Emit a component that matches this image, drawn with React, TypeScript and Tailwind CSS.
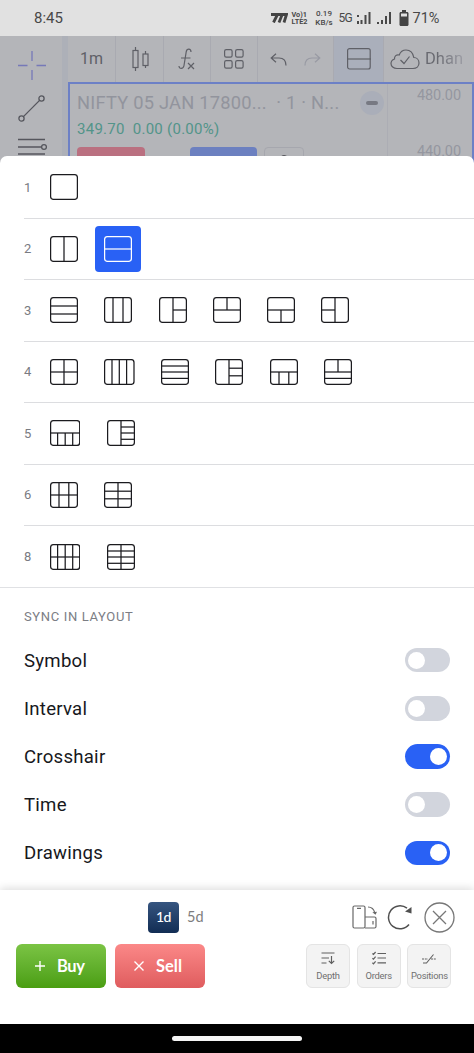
import { useState } from "react";

type Line = [number, number, number, number];

interface LayoutOption {
  id: string;
  width?: number;
  lines: Line[];
}

interface LayoutGroup {
  count: number;
  options: LayoutOption[];
}

const layoutGroups: LayoutGroup[] = [
  { count: 1, options: [{ id: "1", lines: [] }] },
  {
    count: 2,
    options: [
      { id: "2v", lines: [[14, 0, 14, 26]] },
      { id: "2h", lines: [[0, 13, 28, 13]] },
    ],
  },
  {
    count: 3,
    options: [
      { id: "3h", lines: [[0, 9, 28, 9], [0, 17, 28, 17]] },
      { id: "3v", lines: [[9, 0, 9, 26], [19, 0, 19, 26]] },
      { id: "3s", lines: [[14, 0, 14, 26], [14, 13, 28, 13]] },
      { id: "2-1", lines: [[0, 13, 28, 13], [14, 0, 14, 13]] },
      { id: "1-2", lines: [[0, 13, 28, 13], [14, 13, 14, 26]] },
      { id: "3r", lines: [[14, 0, 14, 26], [0, 13, 14, 13]] },
    ],
  },
  {
    count: 4,
    options: [
      { id: "4", lines: [[14, 0, 14, 26], [0, 13, 28, 13]] },
      { id: "4v", width: 30.6, lines: [[8, 0, 8, 26], [15.3, 0, 15.3, 26], [22.6, 0, 22.6, 26]] },
      { id: "4h", lines: [[0, 7, 28, 7], [0, 13, 28, 13], [0, 19.4, 28, 19.4]] },
      { id: "4s", lines: [[14, 0, 14, 26], [14, 9.2, 28, 9.2], [14, 16.8, 28, 16.8]] },
      { id: "1-3", lines: [[0, 13, 28, 13], [9, 13, 9, 26], [18.8, 13, 18.8, 26]] },
      { id: "2-1-1", lines: [[0, 13, 28, 13], [0, 19.4, 28, 19.4], [14, 0, 14, 13]] },
    ],
  },
  {
    count: 5,
    options: [
      { id: "1-4", width: 30.3, lines: [[0, 13, 30.3, 13], [7.6, 13, 7.6, 26], [15.2, 13, 15.2, 26], [22.7, 13, 22.7, 26]] },
      { id: "5s", lines: [[14, 0, 14, 26], [14, 7, 28, 7], [14, 13, 28, 13], [14, 19.3, 28, 19.3]] },
    ],
  },
  {
    count: 6,
    options: [
      { id: "6", lines: [[9, 0, 9, 26], [18.8, 0, 18.8, 26], [0, 13, 28, 13]] },
      { id: "6c", lines: [[14, 0, 14, 26], [0, 9.2, 28, 9.2], [0, 16.8, 28, 16.8]] },
    ],
  },
  {
    count: 8,
    options: [
      { id: "8", width: 30.3, lines: [[0, 13, 30.3, 13], [7.6, 0, 7.6, 26], [15.2, 0, 15.2, 26], [22.7, 0, 22.7, 26]] },
      { id: "8c", lines: [[14, 0, 14, 26], [0, 7, 28, 7], [0, 13, 28, 13], [0, 19.3, 28, 19.3]] },
    ],
  },
];

function LayoutIcon({ width = 28, lines }: LayoutOption) {
  return (
    <svg width={width} height="26" viewBox={`0 0 ${width} 26`} fill="none" stroke="currentColor" strokeWidth="1.25">
      <rect x="0.6" y="0.6" width={width - 1.2} height="24.8" rx="2.8" />
      {lines.map(([x1, y1, x2, y2], index) => (
        <line key={index} x1={x1} y1={y1} x2={x2} y2={y2} />
      ))}
    </svg>
  );
}

function StatusBar() {
  return (
    <div className="flex h-9 items-center bg-[#e1e1e1] pl-[34px] text-[#484848]">
      <span className="w-[236px] text-[15px] leading-9">8:45</span>
      <svg width="18" height="10" viewBox="0 0 18 10" fill="none" stroke="#444" strokeWidth="2.8">
        <path d="M1 1.5H16.5L14 9.5M7.5 1.5L3.5 9.5M12.2 1.5L9 9.5" />
      </svg>
      <div className="ml-[3.5px] w-[19px] text-[7.3px] font-bold leading-[7px]">
        <p>Vo)1</p>
        <p>LTE2</p>
      </div>
      <div className="ml-[4px] w-[19px] text-center text-[8px] font-medium leading-[9px]">
        <p>0.19</p>
        <p>KB/s</p>
      </div>
      <span className="ml-[5px] w-[15px] text-[12px] tracking-[-0.8px]">5G</span>
      <svg width="38" height="14" viewBox="0 0 38 14" fill="#484848" className="ml-[2px]">
        <path d="M1 4h2v2H1zM1 10h2v3H1zM4.5 9h2v4h-2zM8.5 4h2v9h-2zM12.5 1h2v12h-2zM21 11h2v2h-2zM25 9h2v4h-2zM29 5h2v8h-2zM33 1h2v12h-2z" />
      </svg>
      <svg width="10" height="17" viewBox="0 0 10 17" className="ml-[5px]" fill="#444">
        <path d="M3 0h4v2H3z" />
        <path fillRule="evenodd" d="M1.3 2h7.4l.8 1v12l-.8 1H1.3l-.8-1V3zM2 3.5v3h6v-3z" />
      </svg>
      <span className="ml-[4px] pt-px text-[14.5px]">71%</span>
    </div>
  );
}

function Toolbar() {
  return (
    <div className="flex h-[46px] text-[#5f6067]">
      <div className="flex w-[48px] items-center justify-center border-r border-[#a9aab1] text-[16px]">1m</div>
      <div className="flex w-[48px] items-center justify-center border-r border-[#a9aab1]">
        <svg width="18" height="24" viewBox="0 0 18 24" fill="none" stroke="currentColor" strokeWidth="1.2">
          <path d="M4.5 0V3.5M4.5 20.5V24M14.5 4V7M14.5 18.5V21" />
          <rect x="2" y="3.5" width="5" height="17" />
          <rect x="12" y="7" width="5" height="11.5" />
        </svg>
      </div>
      <div className="flex w-[47px] items-center justify-center border-r border-[#a9aab1]">
        <svg width="18" height="22" viewBox="0 0 18 22" fill="none" stroke="currentColor" strokeWidth="1.2">
          <path d="M13 4C13 .3 8.8 .3 8.2 3.8L6 17.5C5.3 21.4 1 21.2 1 18M3 10H12.5M10 15L16 21M16 15L10 21" />
        </svg>
      </div>
      <div className="flex w-[47px] items-center justify-center border-r border-[#a9aab1]">
        <svg width="20" height="20" viewBox="0 0 20 20" fill="none" stroke="currentColor" strokeWidth="1.2">
          <rect x="0.6" y="0.6" width="7.5" height="7.5" rx="1.6" />
          <rect x="11.6" y="0.6" width="7.5" height="7.5" rx="1.6" />
          <rect x="0.6" y="11.6" width="7.5" height="7.5" rx="1.6" />
          <rect x="11.6" y="11.6" width="7.5" height="7.5" rx="1.6" />
        </svg>
      </div>
      <div className="flex w-[76px] items-center justify-center gap-[17px] border-r border-[#a9aab1]">
        <svg width="17" height="13" viewBox="0 0 17 13" fill="none" stroke="currentColor" strokeWidth="1.2">
          <path d="M6 .8L1.2 5L6 9.3M1.2 5H9C14 5 16 8 16 12.5" />
        </svg>
        <svg width="17" height="13" viewBox="0 0 17 13" fill="none" stroke="#989aa3" strokeWidth="1.2">
          <path d="M11 .8L15.8 5L11 9.3M15.8 5H8C3 5 1 8 1 12.5" />
        </svg>
      </div>
      <div className="flex w-[49px] items-center justify-center bg-[#aaafbb] pl-px">
        <svg width="24" height="22" viewBox="0 0 24 22" fill="none" stroke="currentColor" strokeWidth="1.2">
          <rect x="0.6" y="0.6" width="22.6" height="20.4" rx="2" />
          <path d="M0 11H24" />
        </svg>
      </div>
      <div className="flex flex-1 items-center gap-[5px] overflow-hidden border-l border-[#a9aab1] pl-[6px]">
        <svg className="shrink-0" width="30" height="21" viewBox="0 0 30 21" fill="none" stroke="currentColor" strokeWidth="1.2">
          <path d="M7 19.5H23C26.5 19.5 29 17.2 29 14C29 10.8 26.7 8.6 23.8 8.5C23 4 20 1 16 1C12.4 1 10.3 3.1 9.2 6C6.5 5.3 4.2 7.1 4.5 10C2.3 10.8 1 12.4 1 14.5C1 17.2 3.4 19.5 7 19.5Z" />
          <path d="M10.5 11L14 14.5L19.5 7.5" />
        </svg>
        <span className="bg-linear-to-r from-[#686970] from-30% to-[#9b9ca4] bg-clip-text text-[16.5px] text-transparent">Dhan</span>
      </div>
    </div>
  );
}

function ChartPanel() {
  return (
    <div className="flex h-[92px] border-2 border-[#6c80c6]">
      <div className="w-[318px] border-r border-[#acadb4] pl-[7px]">
        <div className="flex h-[34px] items-center pt-[4px]">
          <span className="w-[283px] whitespace-pre text-[18.3px] tracking-[0.22px] text-[#92949d]">NIFTY 05 JAN 17800...  · 1 · N...</span>
          <span className="flex size-[24px] items-center justify-center rounded-full bg-[#aaaeb9]">
            <span className="h-[4px] w-[12px] rounded-full bg-[#777983]" />
          </span>
        </div>
        <p className="h-[29px] whitespace-pre text-[15px] leading-[22px] tracking-[0.27px] text-[#529489]">349.70  0.00 (0.00%)</p>
        <div className="flex">
          <div className="h-8 w-[68px] rounded bg-[#ba7080]" />
          <div className="ml-[45px] h-8 w-[67px] rounded bg-[#6c80c0]" />
          <div className="ml-[7px] flex h-8 w-[40px] justify-center rounded border border-[#a6a7ae] pt-[7px]">
            <span className="h-2 w-[6px] rounded-t-sm border-x border-t border-[#55565c]" />
          </div>
        </div>
      </div>
      <div className="flex-1 pl-[29px] text-[14.5px] leading-[20px] tracking-[-0.1px] text-[#9597a0]">
        <p className="mt-[2px] h-[56px]">480.00</p>
        <p>440.00</p>
      </div>
    </div>
  );
}

function DrawingBar() {
  return (
    <div className="flex w-[62px] flex-col items-center pt-[15px] pl-px text-[#55565d]">
      <svg width="28" height="29" viewBox="0 0 28 29" stroke="#7679b8" strokeWidth="1.3">
        <path d="M14 0V10M14 19V29M0 14.5H9.5M18.5 14.5H28" />
      </svg>
      <svg className="mt-[15px]" width="27" height="27" viewBox="0 0 27 27" fill="none" stroke="currentColor" strokeWidth="1.3">
        <circle cx="3.5" cy="23.5" r="2.6" />
        <circle cx="23.5" cy="3.5" r="2.6" />
        <path d="M5.4 21.6L21.6 5.4" />
      </svg>
      <svg className="mt-[16px] ml-[2px]" width="30" height="18" viewBox="0 0 30 18" fill="none" stroke="currentColor" strokeWidth="1.3">
        <path d="M0 1.5H27M0 9H23.5M0 16H27" />
        <circle cx="26" cy="9" r="2.4" />
      </svg>
    </div>
  );
}

interface SwitchRowProps {
  label: string;
  checked: boolean;
  onToggle: () => void;
}

function SwitchRow({ label, checked, onToggle }: SwitchRowProps) {
  return (
    <div className="flex h-[48.2px] items-center justify-between pr-6 pl-6">
      <span className="pt-[3px] text-[18.6px] tracking-[0.25px] text-[#17181c]">{label}</span>
      <button
        role="switch"
        aria-checked={checked}
        aria-label={label}
        onClick={onToggle}
        className={
          checked
            ? "flex h-[24.5px] w-[45.5px] cursor-pointer items-center justify-end rounded-full bg-[#2961f5] px-[3.5px]"
            : "flex h-[24.5px] w-[45.5px] cursor-pointer items-center rounded-full bg-[#d2d5dd] px-[3.5px]"
        }
      >
        <span className="size-[17px] rounded-full bg-white" />
      </button>
    </div>
  );
}

function Footer() {
  return (
    <div className="h-[134px] bg-white pl-4 font-['Lato',sans-serif] shadow-[0_-2px_8px_rgba(0,0,0,0.13)]">
      <div className="flex h-[54px] items-center">
        <button className="ml-[132px] size-[31px] rounded-[4px] bg-linear-to-b from-[#365580] to-[#122d54] pb-px text-[14px] font-medium tracking-[-0.5px] text-white">1d</button>
        <span className="ml-[8px] w-[164px] pb-px text-[14.5px] text-[#7d7d7d]">5d</span>
        <svg width="25" height="24" viewBox="0 0 25 24" fill="none" stroke="#686868" strokeWidth="1.2" className="ml-px overflow-visible">
          <rect x="1" y="1" width="12" height="22" rx="1.5" />
          <path d="M5 3.3H9M13 12H22.5Q24 12 24 13.5V21.5Q24 23 22.5 23H13M21 16V19.5M16 2C19.5 2 22 4.5 22.8 8" />
          <path d="M20.4 7.3L25 6.8L23.5 9.8Z" fill="#686868" stroke="none" />
        </svg>
        <svg className="ml-[10px]" width="26" height="26" viewBox="0 0 26 26" fill="none" stroke="#505050" strokeWidth="1.5">
          <path d="M22 20.5A11.5 11.5 0 1 1 20 4.2" />
          <path d="M24.5 3V9.5L18 7.5Z" fill="#505050" stroke="none" />
        </svg>
        <svg className="ml-[11px]" width="31" height="31" viewBox="0 0 31 31" fill="none" stroke="#777" strokeWidth="1.3">
          <circle cx="15.5" cy="15.5" r="14.5" />
          <path d="M9 9L22 22M22 9L9 22" />
        </svg>
      </div>
      <div className="flex h-11">
        <button className="flex h-[44px] w-[90px] items-center rounded-[6px] bg-linear-to-b from-[#7bc444] to-[#4a9e10] pl-[19px] text-[16.5px] font-bold text-white">
          <svg width="10" height="10" viewBox="0 0 10 10" stroke="white" strokeWidth="1.4">
            <path d="M5 0V10M0 5H10" />
          </svg>
          <span className="ml-[12px] pt-px tracking-[-0.4px]">Buy</span>
        </button>
        <button className="ml-[9px] flex h-[44px] w-[90px] items-center rounded-[6px] bg-linear-to-b from-[#fb8888] to-[#df5c5e] pl-[19px] text-[16.5px] font-bold text-white">
          <svg width="10" height="10" viewBox="0 0 10 10" stroke="white" strokeWidth="1.4">
            <path d="M.5 .5L9.5 9.5M9.5 .5L.5 9.5" />
          </svg>
          <span className="ml-[12px] pt-px">Sell</span>
        </button>
        <div className="ml-[101px] flex gap-[6.7px] font-['Roboto',sans-serif] text-[9.4px] leading-[11px] tracking-[-0.25px] text-[#6f6f6f]">
          <button className="flex h-[44px] w-[44px] flex-col items-center rounded-[6px] border border-[#e4e4e4] bg-[#f3f3f3] pt-[6px]">
            <svg width="14" height="14" viewBox="0 0 14 14" fill="none" stroke="#606060" strokeWidth="1.2">
              <path d="M.5 2H13.5M.5 7H8M.5 12H5.5M10.5 5V12.5M7.8 9.8L10.5 12.5L13.2 9.8" />
            </svg>
            <span className="mt-[5px]">Depth</span>
          </button>
          <button className="flex h-[44px] w-[44px] flex-col items-center rounded-[6px] border border-[#e4e4e4] bg-[#f3f3f3] pt-[6px]">
            <svg width="14" height="14" viewBox="0 0 14 14" fill="none" stroke="#606060" strokeWidth="1.2">
              <path d="M5.5 2.5H14M5.5 7H14M5.5 11.8H14M.4 2.5L1.5 3.5L3.6 1M.4 7.2L1.5 8.2L3.6 5.7M.4 11.8L1.5 12.8L3.6 10.3" />
            </svg>
            <span className="mt-[5px]">Orders</span>
          </button>
          <button className="flex h-[44px] w-[44px] flex-col items-center rounded-[6px] border border-[#e4e4e4] bg-[#f3f3f3] pt-[6px]">
            <svg width="14" height="14" viewBox="0 0 14 14" fill="none" stroke="#606060" strokeWidth="1.1">
              <path d="M1 12H4.5L11.5 3.5" />
              <path d="M0 8H6M9 8H14" strokeDasharray="2 .8" />
            </svg>
            <span className="mt-[5px]">Positions</span>
          </button>
        </div>
      </div>
    </div>
  );
}

export default function App() {
  const [selected, setSelected] = useState("2h");
  const [sync, setSync] = useState([
    { label: "Symbol", checked: false },
    { label: "Interval", checked: false },
    { label: "Crosshair", checked: true },
    { label: "Time", checked: false },
    { label: "Drawings", checked: true },
  ]);

  const toggleSync = (label: string) => {
    setSync(sync.map((item) => (item.label === label ? { ...item, checked: !item.checked } : item)));
  };

  return (
    <div className="flex h-[1053px] w-[474px] flex-col overflow-hidden bg-white font-['Roboto',sans-serif]">
      <div className="h-[166px] shrink-0 overflow-hidden bg-[#b4b5b9]">
        <StatusBar />
        <div className="flex">
          <DrawingBar />
          <div className="w-[6px] bg-[#adb0b8]" />
          <div className="w-[406px]">
            <Toolbar />
            <ChartPanel />
          </div>
        </div>
      </div>

      <div className="relative -mt-[10px] h-[734px] shrink-0 rounded-t-[7px] bg-white pt-[1px]">
        {layoutGroups.map(({ count, options }, index) => (
          <div key={count} className={index === layoutGroups.length - 1 ? "border-b border-[#e0e1e4]" : "pl-6"}>
            <div
              className={
                index === layoutGroups.length - 1
                  ? "flex h-[60.7px] items-center pl-6"
                  : "flex h-[61.55px] items-center border-b border-[#dcdde0]"
              }
            >
              <span className="w-[26px] text-[13px] text-[#797b82]">{count}</span>
              <div className="-ml-[9px] flex gap-[8.3px]">
                {options.map((option) => (
                  <button
                    key={option.id}
                    aria-label={`Layout ${option.id}`}
                    onClick={() => setSelected(option.id)}
                    className={
                      option.id === selected
                        ? "flex h-[46px] cursor-pointer items-center rounded-[4px] bg-[#2961f5] px-[9px] text-white"
                        : "flex h-[46px] cursor-pointer items-center px-[9px] text-[#1b1b1f]"
                    }
                  >
                    <LayoutIcon {...option} />
                  </button>
                ))}
              </div>
            </div>
          </div>
        ))}

        <h2 className="flex h-[48px] items-center pt-[10px] pl-6 text-[13px] tracking-[0.65px] text-[#7b7d84]">SYNC IN LAYOUT</h2>
        {sync.map((item) => (
          <SwitchRow key={item.label} {...item} onToggle={() => toggleSync(item.label)} />
        ))}
      </div>

      <div className="relative">
        <Footer />
      </div>
      <div className="flex h-[29px] items-center justify-center bg-black">
        <div className="h-[5px] w-[130px] rounded-full bg-[#f4f4f4]" />
      </div>
    </div>
  );
}
